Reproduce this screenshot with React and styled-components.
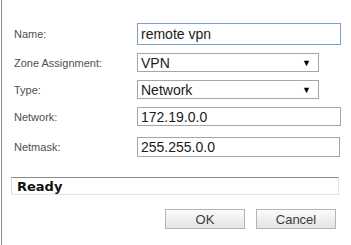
import React from "react";
import styled, { createGlobalStyle } from "styled-components";

const Global = createGlobalStyle`
  html, body { margin: 0; padding: 0; background: #fff; }
  body { width: 351px; height: 245px; overflow: hidden; }
`;

const Dialog = styled.div`
  margin-left: 1px;
  border-left: 1px solid #8c8c8c;
  height: 245px;
  box-sizing: border-box;
  padding-top: 23px;
  font-family: "Liberation Sans", Arial, sans-serif;
`;

const Form = styled.div`
  display: flex;
  flex-direction: column;
  padding-left: 12px;
`;

const Row = styled.div`
  display: flex;
  align-items: center;
  height: ${(p) => p.$h}px;
  margin-bottom: ${(p) => p.$gap || 0}px;
`;

const Label = styled.div`
  width: 123px;
  font-size: 11px;
  color: #505050;
`;

const Field = styled.div`
  box-sizing: border-box;
  height: 100%;
  width: ${(p) => p.$w}px;
  border: 1px solid ${(p) => (p.$focus ? "#7f9fc4" : "#a5a5a5")};
  display: flex;
  align-items: center;
  padding-left: 3px;
  font-size: 14px;
  color: #1a1a1a;
  background: #fff;
`;

const Value = styled.span`
  flex: 1;
`;

const Arrow = styled.span`
  font-size: 9px;
  color: #000;
  margin-right: 7px;
`;

const Status = styled.div`
  margin: 20px 0 0 9px;
  width: 328px;
  height: 18px;
  box-sizing: border-box;
  border-top: 1px solid #8a8a8a;
  border-left: 1px solid #d8d8d8;
  border-right: 1px solid #e4e4e4;
  border-bottom: 1px solid #e4e4e4;
  display: flex;
  align-items: center;
  padding-left: 5px;
  font-family: "DejaVu Sans", Verdana, sans-serif;
  font-weight: bold;
  font-size: 13px;
  color: #111;
`;

const Buttons = styled.div`
  display: flex;
  gap: 11px;
  margin: 14px 0 0 163px;
`;

const Button = styled.div`
  box-sizing: border-box;
  width: ${(p) => p.$w}px;
  height: 20px;
  border: 1px solid #b4b4b4;
  background: linear-gradient(#fbfbfb, #e4e4e4);
  display: flex;
  align-items: center;
  justify-content: center;
  font-size: 13px;
  color: #3a3a3a;
`;

export default function App() {
  return (
    <>
      <Global />
      <Dialog>
        <Form>
          <Row $h={22} $gap={8}>
            <Label>Name:</Label>
            <Field $w={204} $focus>
              <Value>remote vpn</Value>
            </Field>
          </Row>
          <Row $h={19} $gap={8}>
            <Label>Zone Assignment:</Label>
            <Field $w={182}>
              <Value>VPN</Value>
              <Arrow>▼</Arrow>
            </Field>
          </Row>
          <Row $h={19} $gap={8}>
            <Label>Type:</Label>
            <Field $w={182}>
              <Value>Network</Value>
              <Arrow>▼</Arrow>
            </Field>
          </Row>
          <Row $h={19} $gap={11}>
            <Label>Network:</Label>
            <Field $w={204}>
              <Value>172.19.0.0</Value>
            </Field>
          </Row>
          <Row $h={20}>
            <Label>Netmask:</Label>
            <Field $w={203}>
              <Value>255.255.0.0</Value>
            </Field>
          </Row>
        </Form>
        <Status>Ready</Status>
        <Buttons>
          <Button $w={80}>OK</Button>
          <Button $w={80}>Cancel</Button>
        </Buttons>
      </Dialog>
    </>
  );
}
